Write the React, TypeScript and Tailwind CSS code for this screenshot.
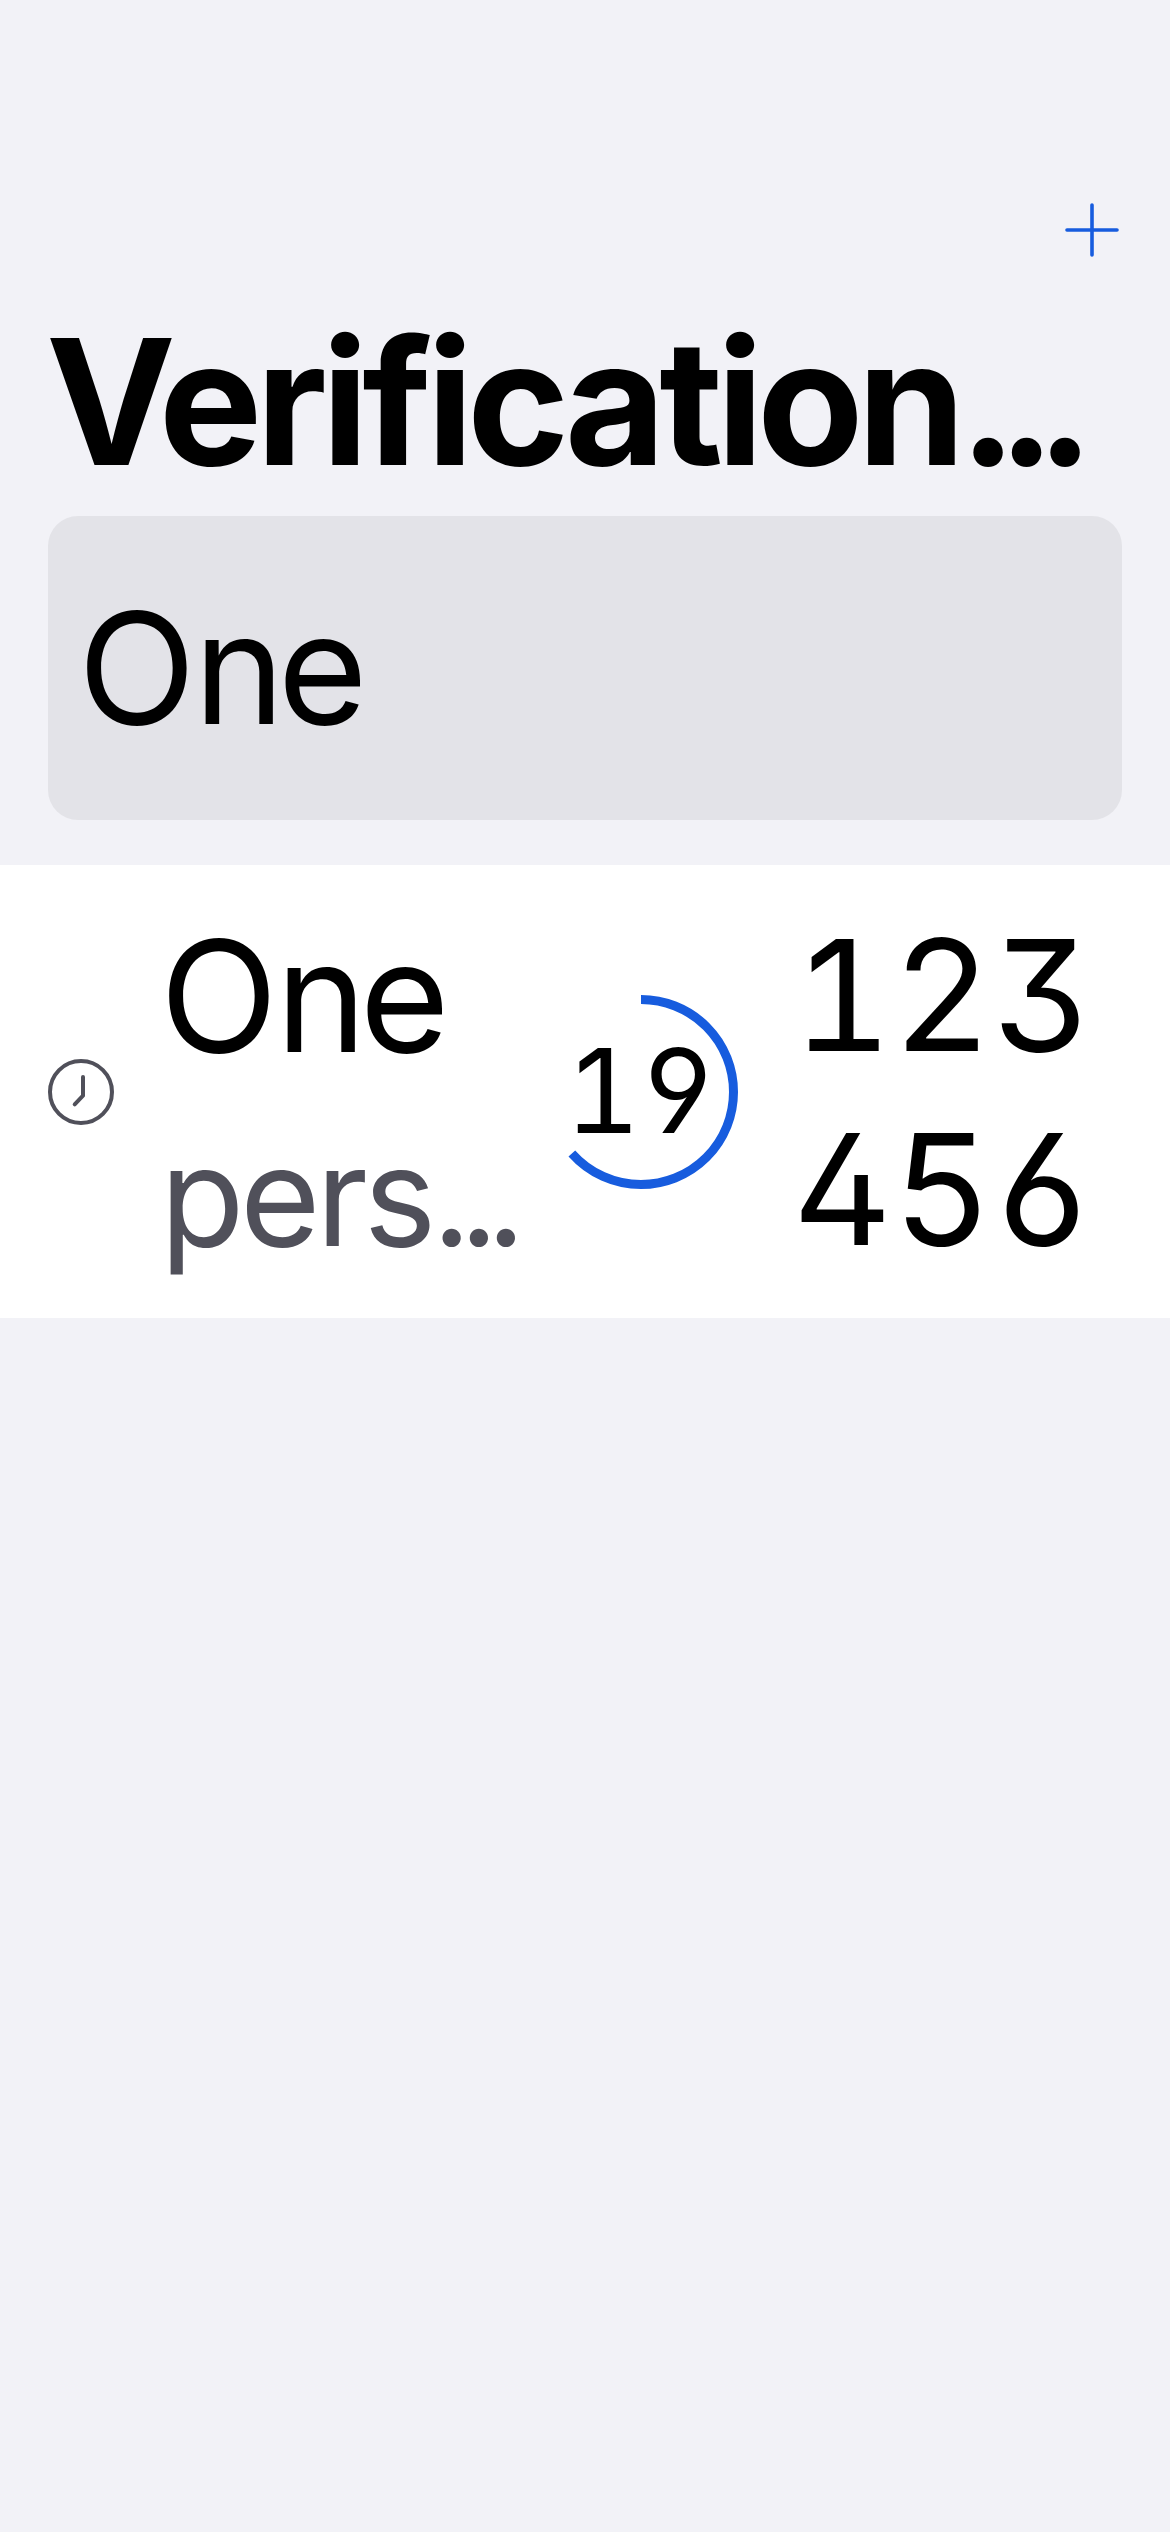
const digits = "[font-feature-settings:'tnum','ss01']";

function PlusIcon() {
  return (
    <svg width="54" height="54" viewBox="0 0 54 54" fill="none" stroke="#175cde" strokeWidth="3.6" strokeLinecap="round">
      <path d="M27 2V52M2 27H52" />
    </svg>
  );
}

function ClockIcon() {
  return (
    <svg className="shrink-0" width="66" height="66" viewBox="0 0 66 66" fill="none" stroke="#50505a" strokeWidth="4">
      <circle cx="33" cy="33" r="31" />
      <path d="M35 18V36.7L26.7 45.3" strokeLinecap="round" strokeLinejoin="round" />
    </svg>
  );
}

function Countdown({ seconds, period }: { seconds: number; period: number }) {
  const length = 2 * Math.PI * 92.5;
  return (
    <div className="grid h-[194px] w-[194px] shrink-0 place-items-center">
      <svg className="col-start-1 row-start-1" width="194" height="194" viewBox="0 0 194 194" fill="none">
        <circle
          cx="97"
          cy="97"
          r="92.5"
          stroke="#175cde"
          strokeWidth="9"
          strokeDasharray={`${(length * seconds) / period} ${length}`}
          transform="rotate(-90 97 97)"
        />
      </svg>
      <span className={`col-start-1 row-start-1 text-[116.5px] leading-none tracking-[0px] ${digits}`}>{seconds}</span>
    </div>
  );
}

export default function App() {
  return (
    <div className="flex h-[2532px] w-[1170px] flex-col overflow-hidden bg-[#f2f2f7] font-['Inter',sans-serif] text-black">
      <header className="flex h-[288px] justify-end pt-[203px] pr-[51px]">
        <button className="h-[54px] w-[54px]" aria-label="Add">
          <PlusIcon />
        </button>
      </header>
      <h1 className="h-[228px] pl-[46px] text-[174px] leading-[228px] font-bold tracking-[-6.5px] whitespace-nowrap">
        Verification<span className="tracking-[-19.7px]">...</span>
      </h1>
      <div className="mx-[48px] h-[304px] shrink-0 rounded-[30px] bg-[#e3e3e8] pl-[30px] text-[154px] leading-[304px] tracking-[-7px]">
        <span className="tracking-[-2px]">O</span>ne
      </div>
      <div className="mt-[45px] flex h-[453px] shrink-0 items-center bg-white pl-[48px]">
        <ClockIcon />
        <div className="ml-[46px] w-[383.5px] shrink-0 pt-[10px] whitespace-nowrap">
          <div className="text-[154px] leading-[198px] tracking-[-7px]">
            <span className="tracking-[-2px]">O</span>ne
          </div>
          <div className="text-[138px] leading-[201px] tracking-[-4.5px] text-[#50505a]">
            pers<span className="tracking-[-12.6px]">...</span>
          </div>
        </div>
        <Countdown seconds={19} period={30} />
        <div className={`ml-[55px] text-[154px] leading-[194px] tracking-[0px] ${digits}`}>
          <div>123</div>
          <div>456</div>
        </div>
      </div>
    </div>
  );
}
